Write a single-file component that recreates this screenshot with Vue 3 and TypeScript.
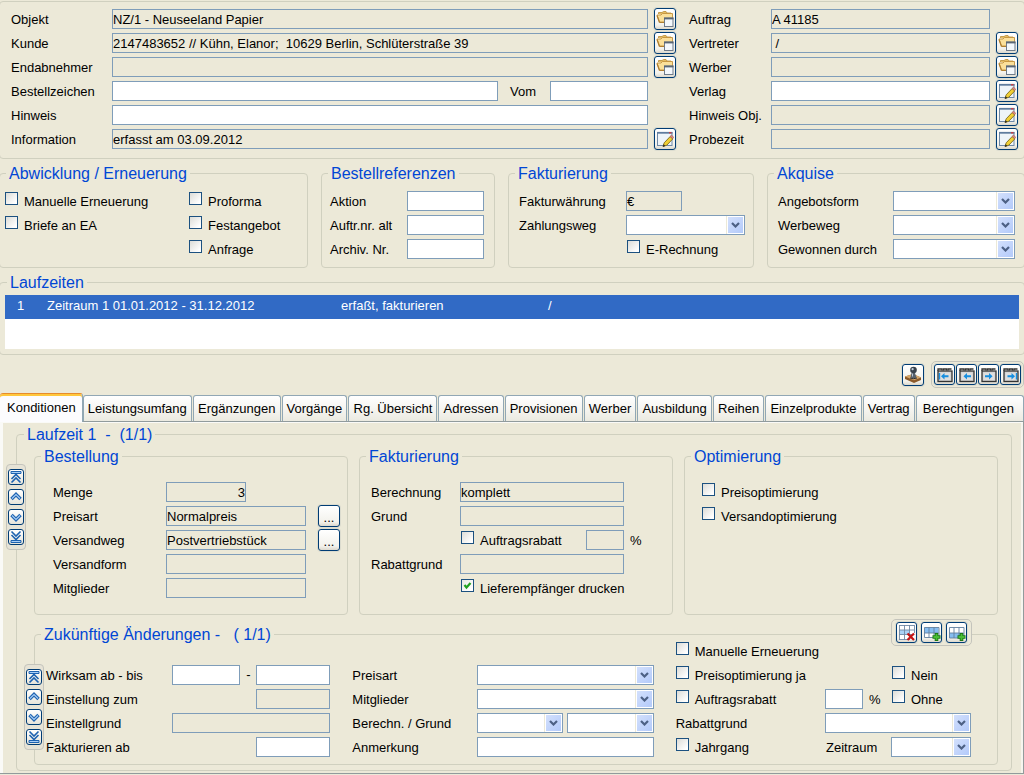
<script setup lang="ts">
import { ref } from 'vue'

interface Field {
  id: string
  label: string
  value?: string
  locked?: boolean
  icon?: 'folder' | 'edit'
}

interface Check {
  id: string
  label: string
}

const orderFields: Field[] = [
  { id: 'auftrag', label: 'Auftrag', value: 'A 41185', locked: true },
  { id: 'vertreter', label: 'Vertreter', value: ' /', locked: true, icon: 'folder' },
  { id: 'werber', label: 'Werber', locked: true, icon: 'folder' },
  { id: 'verlag', label: 'Verlag', icon: 'edit' },
  { id: 'hinweis-obj', label: 'Hinweis Obj.', locked: true, icon: 'edit' },
  { id: 'probezeit', label: 'Probezeit', locked: true, icon: 'edit' }
]

const renewalLeft: Check[] = [
  { id: 'manuell', label: 'Manuelle Erneuerung' },
  { id: 'briefe', label: 'Briefe an EA' }
]

const renewalRight: Check[] = [
  { id: 'proforma', label: 'Proforma' },
  { id: 'festangebot', label: 'Festangebot' },
  { id: 'anfrage', label: 'Anfrage' }
]

const references: Field[] = [
  { id: 'aktion', label: 'Aktion' },
  { id: 'auftrnr', label: 'Auftr.nr. alt' },
  { id: 'archivnr', label: 'Archiv. Nr.' }
]

const acquisition: Field[] = [
  { id: 'angebotsform', label: 'Angebotsform' },
  { id: 'werbeweg', label: 'Werbeweg' },
  { id: 'gewonnen', label: 'Gewonnen durch' }
]

const tabs: string[] = [
  'Konditionen', 'Leistungsumfang', 'Ergänzungen', 'Vorgänge', 'Rg. Übersicht', 'Adressen',
  'Provisionen', 'Werber', 'Ausbildung', 'Reihen', 'Einzelprodukte', 'Vertrag', 'Berechtigungen'
]
const activeTab = ref('Konditionen')

const stepper = [
  { icon: 'top', title: 'Erster' },
  { icon: 'up', title: 'Voriger' },
  { icon: 'down', title: 'Nächster' },
  { icon: 'bottom', title: 'Letzter' }
]

const pager = [
  { icon: 'tab-first', title: 'Erste Seite' },
  { icon: 'tab-prev', title: 'Vorige Seite' },
  { icon: 'tab-next', title: 'Nächste Seite' },
  { icon: 'tab-last', title: 'Letzte Seite' }
]

const rowTools = [
  { icon: 'row-delete', title: 'Zeile löschen' },
  { icon: 'row-before', title: 'Zeile davor einfügen' },
  { icon: 'row-after', title: 'Zeile danach einfügen' }
]

const printRecipient = ref(true)
</script>

<template>
  <main class="page">
    <svg class="defs" aria-hidden="true">
      <symbol id="folder" viewBox="0 0 18 18">
        <path d="M2.500 4V2.500H6L7.500 1.500H10L11 3h4v3.500" fill="#e6bd62" stroke="#b98b35" stroke-width=".8" />
        <path d="M1 5h4l1.500-1.500H16.500V8L14.500 12H3.500z" fill="#fbe09a" stroke="#c2913c" stroke-width=".9" />
        <path d="M3.500 12.500L1 5.500M3.500 12.500h6" fill="none" stroke="#b07f30" stroke-width="1.200" />
        <rect x="8.500" y="8" width="8.500" height="8.500" fill="#f4f8fc" stroke="#6f7b8a" />
        <path d="M8 8.500h9.500" stroke="#5a6675" stroke-width="1.800" />
      </symbol>
      <symbol id="edit" viewBox="0 0 18 18">
        <rect x="1.500" y="2.500" width="14.500" height="13" fill="#eef4f9" stroke="#6f89a6" />
        <path d="M1 2.800h15.500" stroke="#5f7c9e" stroke-width="1.800" />
        <path d="M13 2.800h2.500" stroke="#d33" stroke-width="1.200" />
        <path d="M7 16.500l1.200-3.700 6-6.300 2.600 2.400-6 6.300z" fill="#f0cf35" stroke="#7d6a1c" stroke-width=".9" />
        <path d="M14 6.500l1.400-1.500 2.400 2.300-1.200 1.400z" fill="#e08a80" stroke="#8d5148" stroke-width=".5" />
        <path d="M6.800 16.800l.8-2.600 1.800 1.700z" fill="#222" />
      </symbol>
      <symbol id="stamp" viewBox="0 0 18 18">
        <path d="M1 10.500l8-2.500 8 3.500v2.500l-7 3-9-4z" fill="#8b5a2b" />
        <path d="M1 10.500l8-2.500 8 3.500-7 2.800z" fill="#d6a76a" />
        <path d="M7.500 7h3.500l1.500 4.500q-3 1.500-6 0z" fill="#55606c" />
        <path d="M6 12q3 1.500 7 0" stroke="#2b3036" fill="none" />
        <circle cx="9.500" cy="4" r="3.300" fill="#39424c" />
        <circle cx="8.600" cy="3.200" r="1.100" fill="#c3d0dc" />
        <path d="M8.500 7.500v3" stroke="#b8c4d0" />
      </symbol>
      <symbol id="tab-case" viewBox="0 0 18 18">
        <path d="M2 5V3h4v1.500M7.500 4.500V3h3v1.500M12 4.500V3h3.500" fill="none" stroke="#333" stroke-width="1.300" />
        <rect x="2" y="5" width="14" height="10.500" fill="#cfcfcf" stroke="#333" stroke-width="1.300" />
        <rect x="3.500" y="6.500" width="11" height="7.500" fill="#dedede" />
      </symbol>
      <symbol id="tab-first" viewBox="0 0 18 18">
        <use href="#tab-case" />
        <path d="M3.500 7v6.500" stroke="#168ee0" stroke-width="1.400" />
        <path d="M5 10.200L8.500 7v2.200h4v2h-4v2.200z" fill="#168ee0" />
      </symbol>
      <symbol id="tab-prev" viewBox="0 0 18 18">
        <use href="#tab-case" />
        <path d="M5.500 10.200L9 7v2.200h4v2H9v2.200z" fill="#168ee0" />
      </symbol>
      <symbol id="tab-next" viewBox="0 0 18 18">
        <use href="#tab-case" />
        <path d="M12.500 10.200L9 7v2.200H5v2h4v2.200z" fill="#168ee0" />
      </symbol>
      <symbol id="tab-last" viewBox="0 0 18 18">
        <use href="#tab-case" />
        <path d="M14.500 7v6.500" stroke="#168ee0" stroke-width="1.400" />
        <path d="M13 10.200L9.500 7v2.200h-4v2h4v2.200z" fill="#168ee0" />
      </symbol>
      <symbol id="plus" viewBox="0 0 18 18">
        <path d="M13.500 9v8M9.500 13h8" stroke="#1c7a14" stroke-width="3.600" fill="none" />
        <path d="M13.500 10v6M10.500 13h6" stroke="#49bd35" stroke-width="1.800" fill="none" />
      </symbol>
      <symbol id="row-delete" viewBox="0 0 18 18">
        <rect x="1.500" y="1.500" width="15" height="14" fill="#fff" />
        <rect x="1.500" y="6" width="10" height="4.500" fill="#a9d2f5" />
        <path d="M1.500 1v15M6.500 1v15M11.500 1v15M16.500 1v8M1 1.500h15M1 6h15M1 10.500h15M1 15.500h9" stroke="#6f88a4" stroke-width=".9" fill="none" />
        <path d="M9.500 9.500l6.500 6.500M16 9.500L9.500 16" stroke="#c41414" stroke-width="2.200" />
      </symbol>
      <symbol id="row-before" viewBox="0 0 18 18">
        <rect x="1.500" y="3.500" width="14" height="10" fill="#fff" />
        <rect x="1.500" y="3.500" width="14" height="5.500" fill="#86bdf0" />
        <path d="M1.500 3.500h14.500v10H1.500zM6 3.500v10M11 3.500v10M1.500 9h14" stroke="#62809f" stroke-width=".9" fill="none" />
        <use href="#plus" />
      </symbol>
      <symbol id="row-after" viewBox="0 0 18 18">
        <rect x="1.500" y="3.500" width="14" height="10" fill="#fff" />
        <rect x="1.500" y="9" width="14" height="5" fill="#86bdf0" />
        <path d="M1.500 3.500h14.500v10.500H1.500zM6 3.500v10.500M11 3.500v10.500M1.500 9h14" stroke="#62809f" stroke-width=".9" fill="none" />
        <use href="#plus" />
      </symbol>
      <symbol id="up" viewBox="0 0 14 14">
        <path d="M2.500 9L7 4.500 11.500 9" fill="none" stroke="#1d62b0" stroke-width="3.400" />
        <path d="M3 8.500l4-4 4 4" fill="none" stroke="#a9cff7" stroke-width="1.100" />
      </symbol>
      <symbol id="down" viewBox="0 0 14 14">
        <path d="M2.500 5L7 9.500 11.500 5" fill="none" stroke="#1d62b0" stroke-width="3.400" />
        <path d="M3 5.500l4 4 4-4" fill="none" stroke="#a9cff7" stroke-width="1.100" />
      </symbol>
      <symbol id="top" viewBox="0 0 14 14">
        <path d="M2 1.500h10v2H2z" fill="#a9cff7" stroke="#1d62b0" />
        <path d="M2.500 9L7 4.500 11.500 9M2.500 12.500L7 8l4.500 4.500" fill="none" stroke="#1d62b0" stroke-width="1.600" />
      </symbol>
      <symbol id="bottom" viewBox="0 0 14 14">
        <path d="M2 10.500h10v2H2z" fill="#a9cff7" stroke="#1d62b0" />
        <path d="M2.500 5L7 9.500 11.500 5M2.500 1.500L7 6l4.500-4.500" fill="none" stroke="#1d62b0" stroke-width="1.600" />
      </symbol>
    </svg>

    <section class="head">
      <div class="grid head-left">
        <label for="objekt">Objekt</label>
        <input id="objekt" type="text" readonly value="NZ/1 - Neuseeland Papier">
        <button type="button" class="tool" title="Objekt öffnen"><svg><use href="#folder" /></svg></button>
        <label for="kunde">Kunde</label>
        <input id="kunde" type="text" readonly value="2147483652 // Kühn, Elanor;  10629 Berlin, Schlüterstraße 39">
        <button type="button" class="tool" title="Kunde öffnen"><svg><use href="#folder" /></svg></button>
        <label for="endabnehmer">Endabnehmer</label>
        <input id="endabnehmer" type="text" readonly>
        <button type="button" class="tool" title="Endabnehmer öffnen"><svg><use href="#folder" /></svg></button>
        <label for="bestellzeichen">Bestellzeichen</label>
        <div class="line">
          <input id="bestellzeichen" type="text" class="grow">
          <label for="vom" class="vom">Vom</label>
          <input id="vom" type="text" class="date">
        </div>
        <span></span>
        <label for="hinweis">Hinweis</label>
        <input id="hinweis" type="text">
        <span></span>
        <label for="information">Information</label>
        <input id="information" type="text" readonly value="erfasst am 03.09.2012">
        <button type="button" class="tool" title="Information bearbeiten"><svg><use href="#edit" /></svg></button>
      </div>
      <div class="grid head-right">
        <template v-for="f in orderFields" :key="f.id">
          <label :for="f.id">{{ f.label }}</label>
          <input :id="f.id" type="text" :readonly="f.locked" :value="f.value">
          <button v-if="f.icon" type="button" class="tool" :title="f.label"><svg><use :href="'#' + f.icon" /></svg></button>
          <span v-else></span>
        </template>
      </div>
    </section>

    <div class="groups">
      <fieldset>
        <legend>Abwicklung / Erneuerung</legend>
        <div class="body renewal">
          <div>
            <label v-for="c in renewalLeft" :key="c.id" class="check"><input type="checkbox"><span>{{ c.label }}</span></label>
          </div>
          <div>
            <label v-for="c in renewalRight" :key="c.id" class="check"><input type="checkbox"><span>{{ c.label }}</span></label>
          </div>
        </div>
      </fieldset>
      <fieldset>
        <legend>Bestellreferenzen</legend>
        <div class="body grid refs">
          <template v-for="f in references" :key="f.id">
            <label :for="f.id">{{ f.label }}</label>
            <input :id="f.id" type="text">
          </template>
        </div>
      </fieldset>
      <fieldset>
        <legend>Fakturierung</legend>
        <div class="body grid billing">
          <label for="waehrung">Fakturwährung</label>
          <input id="waehrung" type="text" class="currency" readonly value="€">
          <label for="zahlungsweg">Zahlungsweg</label>
          <select id="zahlungsweg"></select>
          <span></span>
          <label class="check inset"><input type="checkbox"><span>E-Rechnung</span></label>
        </div>
      </fieldset>
      <fieldset>
        <legend>Akquise</legend>
        <div class="body grid acquire">
          <template v-for="f in acquisition" :key="f.id">
            <label :for="f.id">{{ f.label }}</label>
            <select :id="f.id"></select>
          </template>
        </div>
      </fieldset>
    </div>

    <fieldset class="terms">
      <legend>Laufzeiten</legend>
      <div class="list">
        <table>
          <tbody>
            <tr>
              <td class="c-no">1</td>
              <td class="c-term">Zeitraum 1 01.01.2012 - 31.12.2012</td>
              <td class="c-state">erfaßt, fakturieren</td>
              <td>/</td>
            </tr>
          </tbody>
        </table>
      </div>
    </fieldset>

    <div class="toolbar">
      <button type="button" class="tool" title="Stempel"><svg><use href="#stamp" /></svg></button>
      <div class="pager">
        <button v-for="p in pager" :key="p.icon" type="button" class="tool" :title="p.title"><svg><use :href="'#' + p.icon" /></svg></button>
      </div>
    </div>

    <div class="tabs" role="tablist">
      <button
        v-for="t in tabs" :key="t" type="button" role="tab" class="tab"
        :class="{ active: t === activeTab }" :aria-selected="t === activeTab" @click="activeTab = t"
      >{{ t }}</button>
    </div>

    <section class="panel" role="tabpanel">
      <fieldset class="outer">
        <legend>Laufzeit 1&nbsp; -&nbsp; (1/1)</legend>
        <div class="stepper stepper-term">
          <button v-for="s in stepper" :key="s.icon" type="button" class="step" :title="s.title"><svg><use :href="'#' + s.icon" /></svg></button>
        </div>

        <div class="cards">
          <fieldset>
            <legend>Bestellung</legend>
            <div class="grid card order">
              <label for="menge">Menge</label>
              <input id="menge" type="text" class="amount" readonly value="3">
              <span></span>
              <label for="preisart">Preisart</label>
              <input id="preisart" type="text" readonly value="Normalpreis">
              <button type="button" class="tool dots" title="Preisart wählen">...</button>
              <label for="versandweg">Versandweg</label>
              <input id="versandweg" type="text" readonly value="Postvertriebstück">
              <button type="button" class="tool dots" title="Versandweg wählen">...</button>
              <label for="versandform">Versandform</label>
              <input id="versandform" type="text" readonly>
              <span></span>
              <label for="mitglieder">Mitglieder</label>
              <input id="mitglieder" type="text" readonly>
              <span></span>
            </div>
          </fieldset>
          <fieldset>
            <legend>Fakturierung</legend>
            <div class="grid card invoice">
              <label for="berechnung">Berechnung</label>
              <input id="berechnung" type="text" readonly value="komplett">
              <span></span>
              <label for="grund">Grund</label>
              <input id="grund" type="text" readonly>
              <span></span>
              <span></span>
              <div class="line">
                <label class="check inset grow"><input type="checkbox"><span>Auftragsrabatt</span></label>
                <input type="text" class="percent" readonly aria-label="Auftragsrabatt in Prozent">
              </div>
              <span class="unit">%</span>
              <label for="rabattgrund">Rabattgrund</label>
              <input id="rabattgrund" type="text" readonly>
              <span></span>
              <span></span>
              <label class="check inset"><input v-model="printRecipient" type="checkbox"><span>Lieferempfänger drucken</span></label>
              <span></span>
            </div>
          </fieldset>
          <fieldset>
            <legend>Optimierung</legend>
            <div class="card optimise">
              <label class="check"><input type="checkbox"><span>Preisoptimierung</span></label>
              <label class="check"><input type="checkbox"><span>Versandoptimierung</span></label>
            </div>
          </fieldset>
        </div>

        <fieldset class="future">
          <legend>Zukünftige Änderungen -&nbsp; &nbsp;( 1/1)</legend>
          <div class="row-tools">
            <button v-for="r in rowTools" :key="r.icon" type="button" class="tool" :title="r.title"><svg><use :href="'#' + r.icon" /></svg></button>
          </div>
          <div class="stepper stepper-future">
            <button v-for="s in stepper" :key="s.icon" type="button" class="step" :title="s.title"><svg><use :href="'#' + s.icon" /></svg></button>
          </div>
          <div class="future-grid">
            <div class="grid when">
              <label for="wirksam">Wirksam ab - bis</label>
              <div class="line">
                <input id="wirksam" type="text" class="grow">
                <span class="dash">-</span>
                <input type="text" class="day" aria-label="Wirksam bis">
              </div>
              <label for="einstellung">Einstellung zum</label>
              <input id="einstellung" type="text" class="day end" readonly>
              <label for="einstellgrund">Einstellgrund</label>
              <input id="einstellgrund" type="text" readonly>
              <label for="fakturieren">Fakturieren ab</label>
              <input id="fakturieren" type="text" class="day end">
            </div>
            <div class="grid what">
              <label for="f-preisart">Preisart</label>
              <select id="f-preisart"></select>
              <label for="f-mitglieder">Mitglieder</label>
              <select id="f-mitglieder"></select>
              <label for="f-berechn">Berechn. / Grund</label>
              <div class="line pair">
                <select id="f-berechn"></select>
                <select aria-label="Grund"></select>
              </div>
              <label for="anmerkung">Anmerkung</label>
              <input id="anmerkung" type="text">
            </div>
            <div class="flags">
              <label class="check"><input type="checkbox"><span>Manuelle Erneuerung</span></label>
              <div class="line">
                <label class="check grow"><input type="checkbox"><span>Preisoptimierung ja</span></label>
                <label class="check short"><input type="checkbox"><span>Nein</span></label>
              </div>
              <div class="line">
                <label class="check grow"><input type="checkbox"><span>Auftragsrabatt</span></label>
                <input type="text" class="percent" aria-label="Neuer Auftragsrabatt in Prozent">
                <span class="unit mid">%</span>
                <label class="check short"><input type="checkbox"><span>Ohne</span></label>
              </div>
              <div class="line">
                <label for="f-rabattgrund" class="grow">Rabattgrund</label>
                <select id="f-rabattgrund" class="reason"></select>
              </div>
              <div class="line">
                <label class="check grow"><input type="checkbox"><span>Jahrgang</span></label>
                <label for="zeitraum" class="period">Zeitraum</label>
                <select id="zeitraum" class="span"></select>
              </div>
            </div>
          </div>
        </fieldset>
      </fieldset>
    </section>
  </main>
</template>

<style>
body {
  margin: 0;
  background: #ece9d8;
}
</style>

<style scoped>
* {
  box-sizing: border-box;
}

.page {
  overflow: hidden;
  background: #ece9d8;
  color: #000;
  font: 13px/16px "Liberation Sans", Arial, sans-serif;
  white-space: nowrap;
}

.defs {
  display: none;
}

input,
select,
button {
  margin: 0;
  font: inherit;
  color: inherit;
}

input[type="text"] {
  width: 100%;
  min-width: 0;
  height: 20px;
  padding: 0;
  border: 1px solid #7f9db9;
  border-radius: 0;
  background: #fff;
  outline: none;
}

input[type="text"]:read-only {
  background: #ece9d8;
}

select {
  appearance: none;
  width: 100%;
  min-width: 0;
  height: 20px;
  padding: 0 20px 0 2px;
  border: 1px solid #7f9db9;
  border-radius: 0;
  background-color: #fff;
  background-image:
    url("data:image/svg+xml,%3Csvg xmlns='http://www.w3.org/2000/svg' width='9' height='6'%3E%3Cpath d='M1 1l3.500 3.500L8 1' fill='none' stroke='%234d6185' stroke-width='2.200'/%3E%3C/svg%3E"),
    linear-gradient(135deg, #d3e0fc, #b3cafa),
    linear-gradient(#ece9d8, #ece9d8);
  background-repeat: no-repeat;
  background-position: right 4px center, right 1px center, right 17px center;
  background-size: 9px 6px, 15px 16px, 1px 18px;
}

input[type="checkbox"] {
  appearance: none;
  flex: none;
  width: 13px;
  height: 13px;
  margin: 3px 6px 0 0;
  border: 1px solid #1c5180;
  background: linear-gradient(135deg, #dcdcd7, #fff 85%);
}

input[type="checkbox"]:checked {
  background:
    url("data:image/svg+xml,%3Csvg xmlns='http://www.w3.org/2000/svg' width='9' height='9'%3E%3Cpath d='M1.500 4l2 2.500L7.500 2' fill='none' stroke='%2321a121' stroke-width='2.200'/%3E%3C/svg%3E") no-repeat center,
    linear-gradient(135deg, #e8e8e4, #fff 85%);
}

.check {
  display: flex;
  align-items: flex-start;
  height: 24px;
}

.check span {
  line-height: 26px;
}

.inset {
  padding-left: 1px;
}

.tool {
  display: flex;
  flex: none;
  align-items: center;
  justify-content: center;
  width: 22px;
  height: 22px;
  padding: 0;
  border: 1px solid #003c74;
  border-radius: 3px;
  background: linear-gradient(#fff, #f3f2ec 80%, #dcd8cd);
  box-shadow: 0 0 0 1px #dcdccf;
}

.tool svg {
  flex: none;
  width: 18px;
  height: 18px;
}

fieldset {
  position: relative;
  min-width: 0;
  margin: 0;
  padding: 0;
  border: 1px solid #d0d0bf;
  border-radius: 4px;
}

legend {
  margin-left: 6px;
  padding: 2px 3px 0;
  color: #0046d5;
  font-size: 16px;
  line-height: 18px;
}

.grid {
  display: grid;
  grid-auto-rows: 24px;
  align-items: center;
}

.grid > label:not(.check),
.line > label:not(.check) {
  padding-top: 2px;
}

.line {
  display: flex;
  align-items: center;
  min-width: 0;
  height: 24px;
}

.grow {
  flex: 1 1 0;
  min-width: 0;
}

.head {
  display: grid;
  grid-template-columns: minmax(0, 1fr) 329px;
  column-gap: 13px;
  margin: 1px -1px 0;
  padding: 5px 6px 7px 11px;
  border: 1px solid #d0d0bf;
  border-radius: 4px;
}

.head-left {
  grid-template-columns: 101px minmax(0, 1fr) 28px;
}

.head-right {
  grid-template-columns: 82px minmax(0, 1fr) 28px;
}

.head .tool {
  justify-self: end;
}

.vom {
  width: 52px;
  padding-left: 12px;
}

.line .date {
  width: 98px;
}

.groups {
  display: grid;
  grid-template-columns: 309fr 174fr 246fr 258fr;
  column-gap: 13px;
  margin: 4px -1px 0;
}

.body {
  padding: 6px 0;
}

.renewal {
  display: grid;
  grid-template-columns: 184px 1fr;
  padding-left: 5px;
}

.refs {
  grid-template-columns: 77px minmax(0, 1fr);
  padding-right: 10px;
  padding-left: 8px;
}

.billing {
  grid-template-columns: 107px minmax(0, 1fr);
  padding-right: 8px;
  padding-left: 10px;
}

.billing .currency {
  width: 56px;
}

.acquire {
  grid-template-columns: 115px minmax(0, 1fr);
  padding-right: 9px;
  padding-left: 10px;
}

.terms {
  margin: 4px -1px 0;
}

.terms legend {
  margin-left: 7px;
}

.list {
  height: 54px;
  margin: 3px 5px 5px;
  background: #fff;
}

table {
  width: 100%;
  border-collapse: collapse;
  table-layout: fixed;
}

tr {
  height: 24px;
  background: #316ac5;
  color: #fff;
}

td {
  padding: 0 0 2px;
}

.c-no {
  width: 42px;
  padding-left: 12px;
}

.c-term {
  width: 294px;
}

.c-state {
  width: 207px;
}

.toolbar {
  display: flex;
  align-items: center;
  justify-content: flex-end;
  gap: 7px;
  margin-top: 6px;
}

.pager {
  display: flex;
  gap: 1px;
  padding: 2px;
  border: 1px solid #c4c4bc;
  border-radius: 5px;
}

.pager .tool,
.row-tools .tool {
  width: 21px;
  height: 21px;
}

.tabs {
  display: flex;
  align-items: flex-end;
  gap: 1px;
  height: 34px;
  border-bottom: 1px solid #919b9c;
}

.tab {
  flex: 1 1 auto;
  height: 26px;
  padding: 1px 3px 0;
  border: 1px solid #91a7b4;
  border-bottom: 0;
  border-radius: 3px 3px 0 0;
  background: linear-gradient(#fff, #f4f3ee 60%, #ebeae0);
}

.tab.active {
  flex-grow: 0;
  height: 29px;
  margin-right: -1px;
  margin-bottom: -1px;
  padding: 0 6px 0 7px;
  border-top-color: #e68b2c;
  border-left: 0;
  background: #fcfcfe;
  box-shadow: inset 0 2px 0 #ffc73c;
}

.tab:last-child {
  padding-right: 8px;
  padding-left: 5px;
}

.panel {
  padding: 2px 11px 2px 16px;
  border: solid #919b9c;
  border-width: 0 1px 1px 0;
  box-shadow: inset 3px 1px 0 #fafaf7, inset -2px 0 0 #f6f5ee;
}

.outer {
  padding: 0 13px 0 17px;
}

.outer > legend {
  margin-left: -10px;
}

.cards {
  display: grid;
  grid-template-columns: repeat(3, minmax(0, 1fr));
  column-gap: 11px;
  padding-top: 2px;
}

.card {
  padding-top: 14px;
  padding-bottom: 14px;
}

.order {
  grid-template-columns: 113px minmax(0, 1fr) 34px;
  padding-right: 7px;
  padding-left: 18px;
}

.order .amount {
  width: 80px;
  text-align: right;
}

.dots {
  align-items: flex-end;
  justify-self: end;
}

.invoice {
  grid-template-columns: 89px minmax(0, 1fr) 48px;
  padding-left: 11px;
}

.percent {
  flex: none;
}

.line .percent {
  width: 38px;
}

.unit {
  padding-top: 2px;
  padding-left: 6px;
}

.optimise {
  padding-left: 17px;
}

.future {
  margin: 9px 0 5px;
}

.row-tools {
  position: absolute;
  top: -25px;
  right: 25px;
  display: flex;
  gap: 4px;
  padding: 2px 4px;
  border: 1px solid #c4c4bc;
  border-radius: 5px;
  background: #ece9d8;
}

.stepper {
  position: absolute;
  display: flex;
  flex-direction: column;
  gap: 4px;
  padding: 4px 1px;
  border: 1px solid #c4c4bc;
  border-radius: 4px;
  background: #e6e3d6;
}

.stepper-term {
  top: 20px;
  left: -11px;
}

.stepper-future {
  top: 20px;
  left: -11px;
}

.step {
  display: flex;
  align-items: center;
  justify-content: center;
  width: 16px;
  height: 16px;
  padding: 0;
  border: 1px solid #003c74;
  border-radius: 3px;
  background: linear-gradient(#fff, #e6e4da);
}

.step svg {
  flex: none;
  width: 14px;
  height: 14px;
}

.future-grid {
  display: grid;
  grid-template-columns: 284fr 301fr 295fr;
  column-gap: 22px;
  align-items: end;
  padding: 0 26px 5px 11px;
}

.when {
  grid-template-columns: 126px minmax(0, 1fr);
}

.dash {
  width: 16px;
  text-align: center;
}

.when .day {
  width: 74px;
}

.when .end {
  justify-self: end;
}

.what {
  grid-template-columns: 125px minmax(0, 1fr);
}

.pair {
  gap: 4px;
}

.flags {
  margin-top: -5px;
}

.flags .mid {
  width: 29px;
}

.flags .short {
  width: 79px;
}

.flags .reason {
  width: 146px;
}

.flags .period {
  width: 65px;
}

.flags .span {
  width: 80px;
}
</style>
